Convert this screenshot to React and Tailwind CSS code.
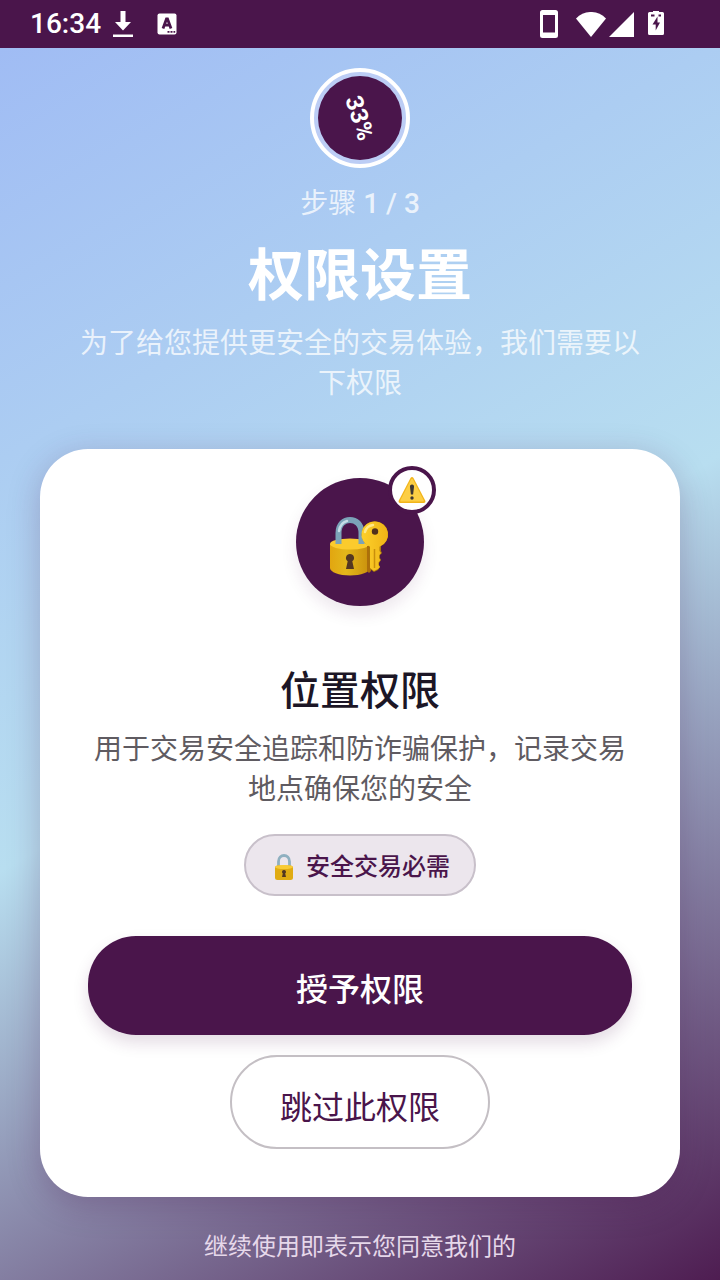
import { useState } from "react";

function DownloadIcon() {
  return (
    <svg viewBox="0 0 20 26" className="h-[26px] w-5" fill="white" aria-hidden="true">
      <path d="M7.5 0h5v11H18l-8 8.5L2 11h5.5z" />
      <path d="M0 23.500h20V26H0z" />
    </svg>
  );
}

function LetterIcon() {
  return (
    <svg viewBox="0 0 20 22" className="h-[22px] w-5" aria-hidden="true">
      <rect x="0.5" y="0.5" width="19" height="21" rx="2" fill="white" />
      <path d="M6 15.500 9.500 6h1L14 15.500M7.500 12.200h5" fill="none" stroke="#4a154b" strokeWidth="2.800" />
      <path d="M10.500 18h2v1.700h-2zM13.500 18h2v1.700h-2zM16.500 18h1.700v1.700h-1.700z" fill="#4a154b" />
    </svg>
  );
}

function PhoneIcon() {
  return (
    <svg viewBox="0 0 18 28" className="h-7 w-[18px]" aria-hidden="true">
      <path
        fill="white"
        fillRule="evenodd"
        d="M2.500 0h13A2.500 2.500 0 0 1 18 2.500v23a2.500 2.500 0 0 1-2.500 2.500h-13A2.500 2.500 0 0 1 0 25.500v-23A2.500 2.500 0 0 1 2.500 0zM3 5v17.500h12V5z"
      />
    </svg>
  );
}

function WifiIcon() {
  return (
    <svg viewBox="0 0 30 25" className="h-[25px] w-[30px]" fill="white" aria-hidden="true">
      <path d="M0 6.500C8-2.200 22-2.200 30 6.500L15 25z" />
    </svg>
  );
}

function SignalIcon() {
  return (
    <svg viewBox="0 0 25 25" className="size-[25px]" fill="white" aria-hidden="true">
      <path d="M25 0v25H0z" />
    </svg>
  );
}

function BatteryIcon() {
  return (
    <svg viewBox="0 0 16 26" className="h-[26px] w-4" aria-hidden="true">
      <path fill="white" d="M5 0h6v1h3.500A1.500 1.500 0 0 1 16 2.500v20a1.500 1.500 0 0 1-1.500 1.500h-13A1.500 1.500 0 0 1 0 22.500v-20A1.500 1.500 0 0 1 1.500 1H5z" />
      <path fill="#4a154b" d="M9.500 5.500 4.500 13.500h3.200v6L12 11.500H9.500zM3 3.500h3.500v2H3zM10.500 3.500H13v2h-2.500z" />
    </svg>
  );
}

function LockKeyIcon() {
  return (
    <svg viewBox="0 0 60 60" className="size-[60px]" aria-hidden="true">
      <defs>
        <linearGradient id="body" x1="0" x2="1" y1="0" y2="0">
          <stop offset="0" stopColor="#e2a610" />
          <stop offset="0.4" stopColor="#e3b71b" />
          <stop offset="1" stopColor="#c98f0c" />
        </linearGradient>
        <linearGradient id="key" x1="0" x2="1" y1="0" y2="0">
          <stop offset="0" stopColor="#fdd02b" />
          <stop offset="1" stopColor="#efb316" />
        </linearGradient>
      </defs>
      <path d="M0 28v24c0 4 9 7.500 20 7.500S40 56 40 52V28z" fill="url(#body)" />
      <ellipse cx="20" cy="28" rx="20" ry="5.500" fill="#fbcb2d" />
      <path d="M8.500 28V17C8.500-.5 31.500-.5 31.500 17v11" fill="none" stroke="#7ba3b8" strokeWidth="6" />
      <path d="M9 15c1-6 4-9 8-10" fill="none" stroke="#c5dde7" strokeWidth="2.500" strokeLinecap="round" />
      <path d="M20 38a4 4 0 0 1 2.300 7.300L24 53h-8l1.700-7.700A4 4 0 0 1 20 38z" fill="#533722" />
      <path d="M37 30h4v25l-2 2-2-2z" fill="#ad6f0a" />
      <path d="M47 5.500a13 13 0 0 1 4 24.500v5l1 2-2 2v3l1 2-2 3v2l1 2-2 3-4 2-4-3-1-23A13 13 0 0 1 47 5.500z" fill="#a7780b" />
      <path d="M45 5.500a13 13 0 0 1 4.500 25.200V35l1.500 2-2 2.500v2.500l1.500 2-2 2.500V49l1.500 2-2 2-4 2-4-3V30.700A13 13 0 0 1 45 5.500z" fill="url(#key)" />
      <path d="M44.500 33v19" stroke="#c98f0c" strokeWidth="1.500" />
      <path d="M35 16c1-4 4-6.500 8-7" fill="none" stroke="#ffe887" strokeWidth="2.500" strokeLinecap="round" />
      <circle cx="45" cy="15.500" r="3.200" fill="#51301c" />
    </svg>
  );
}

function LockIcon() {
  return (
    <svg viewBox="0 0 20 28" className="h-7 w-5" aria-hidden="true">
      <path d="M4.500 13V8.500C4.500.5 15.500.5 15.500 8.500V13" fill="none" stroke="#8fb0c0" strokeWidth="2.800" />
      <rect x="1" y="12.500" width="18" height="14.500" rx="2.500" fill="#e0ab13" />
      <ellipse cx="10" cy="14" rx="9" ry="2" fill="#f9cb35" />
      <path d="M10 17a2 2 0 0 1 1.200 3.600L12 24H8l.8-3.400A2 2 0 0 1 10 17z" fill="#533722" />
    </svg>
  );
}

function WarningIcon() {
  return (
    <svg viewBox="0 0 28 28" className="size-7" aria-hidden="true">
      <path d="M12.500 2c.7-1.300 2.300-1.300 3 0l11.700 22.500c.6 1.300 0 2.500-1.500 2.500H2.300C.8 27 .2 25.800.8 24.500z" fill="#f2b51b" />
      <path d="M13 3.500c.5-.9 1.500-.9 2 0L25.500 24c.5 1 0 1.500-1 1.500h-21c-1 0-1.500-.5-1-1.500z" fill="#fcce45" />
      <path d="M14 8.500c1.500 0 2.200 1 2 2.500l-.9 7.500h-2.200L12 11c-.2-1.500.5-2.500 2-2.500z" fill="#3d3532" />
      <circle cx="14" cy="22" r="1.700" fill="#3d3532" />
    </svg>
  );
}

function StatusBar() {
  return (
    <header className="flex h-12 items-center justify-between bg-[#4a154b] pr-14 pl-[30px] text-white">
      <div className="flex items-center">
        <span className="text-[28px] leading-none font-medium">16:34</span>
        <span className="ml-3 flex items-center gap-6">
          <DownloadIcon />
          <LetterIcon />
        </span>
      </div>
      <div className="flex items-center">
        <PhoneIcon />
        <span className="ml-[18px] flex gap-[3px]">
          <WifiIcon />
          <SignalIcon />
        </span>
        <span className="ml-3.5">
          <BatteryIcon />
        </span>
      </div>
    </header>
  );
}

export default function App() {
  const [status, setStatus] = useState("pending");

  return (
    <div className="flex min-h-screen flex-col font-['Roboto','Noto_Sans_CJK_SC',sans-serif]" lang="zh-CN">
      <StatusBar />

      <main className="flex flex-1 flex-col items-center bg-[linear-gradient(150deg,#a0bcf4_0%,#b8def0_50%,#4a154b_102%)] px-10 pt-5 text-center">
        {/* Progress */}
        <div className="flex size-[100px] items-center justify-center rounded-full border-4 border-white bg-[#bccdf5]">
          <div className="flex size-[84px] items-center justify-center rounded-full bg-[#4a154b]">
            <span className="rotate-72 text-2xl font-bold text-white">33%</span>
          </div>
        </div>
        <p className="mt-4 text-[28px] leading-10 text-white/75">
          步骤 <span className="font-medium">1 / 3</span>
        </p>
        <h1 className="mt-4 text-[56px] leading-[72px] font-bold text-white">权限设置</h1>
        <p className="mt-3 px-8 text-[28px] leading-10 text-white/75">
          为了给您提供更安全的交易体验，我们需要以下权限
        </p>

        {/* Permission card */}
        <section className="mt-[45px] flex w-full flex-col items-center rounded-[48px] bg-white px-12 pt-[29px] pb-12 shadow-[0_8px_32px_rgba(74,21,75,0.25)]">
          <div className="relative flex size-32 items-center justify-center rounded-full bg-[#4a154b] pt-2 shadow-[0_8px_16px_rgba(74,21,75,0.1)]">
            <LockKeyIcon />
            <span className="absolute -top-3 -right-3 flex size-12 items-center justify-center rounded-full border-4 border-[#4a154b] bg-white">
              <WarningIcon />
            </span>
          </div>
          <h2 className="mt-14 text-[40px] leading-[60px] font-medium text-[#1c1626]">位置权限</h2>
          <p className="mt-2 text-[28px] leading-10 text-[#5f5b61]">
            用于交易安全追踪和防诈骗保护，记录交易地点确保您的安全
          </p>
          <div className="mt-6 flex h-[62px] items-center gap-3 rounded-full border-2 border-[#c8c0ca] bg-[#ece6ed] pt-1 pr-6 pl-7 text-2xl font-medium text-[#4a154b]">
            <LockIcon />
            <span>安全交易必需</span>
          </div>
          <button
            type="button"
            onClick={() => setStatus("granted")}
            disabled={status === "granted"}
            className="mt-10 h-[99px] w-full rounded-[48px] bg-[#4a154b] pt-2 text-[32px] font-medium text-white shadow-[0_8px_16px_rgba(74,21,75,0.15)]"
          >
            授予权限
          </button>
          <button
            type="button"
            onClick={() => setStatus("skipped")}
            className="mt-5 h-[94px] rounded-[48px] border-2 border-[#c4bfc4] px-12 pt-3 text-[32px] text-[#4a154b]"
          >
            跳过此权限
          </button>
        </section>

        <p className="mt-[34px] text-2xl leading-8 text-[#e6d8ea]">继续使用即表示您同意我们的</p>
      </main>
    </div>
  );
}
